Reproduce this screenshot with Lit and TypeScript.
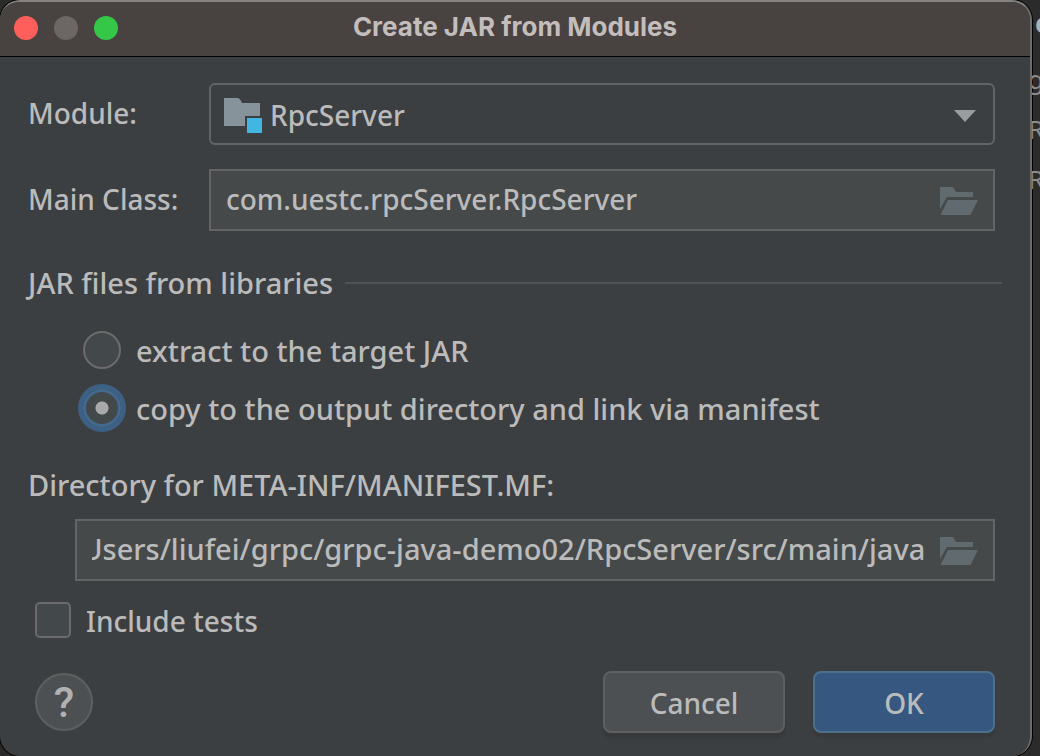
import { LitElement, html, css, svg } from "lit";
import { customElement, query, state } from "lit/decorators.js";

const folderIcon = svg`
  <path fill="#616a6e" d="M0 0h13l3 5h17v5H7L0 22z" />
  <path fill="#616a6e" d="M8 13h30l-7.500 15H0.500z" />
`;

@customElement("path-field")
class PathField extends LitElement {
  static properties = {
    value: { type: String },
    label: { type: String },
  };
  declare value: string;
  declare label: string;

  static styles = css`
    :host {
      display: flex;
      align-items: center;
      box-sizing: border-box;
      height: 62px;
      min-width: 0;
      border: 2px solid #646464;
      background: #45494a;
      padding: 0 15px;
      gap: 15px;
    }
    .text {
      flex: 1;
      min-width: 0;
      padding: 0;
      border: 0;
      outline: 0;
      background: none;
      color: inherit;
      font: inherit;
      margin-bottom: 2px;
    }
    .browse {
      display: flex;
      margin-top: 2px;
      padding: 0;
      border: 0;
      background: none;
    }
  `;

  @query(".text") input!: HTMLInputElement;

  firstUpdated() {
    requestAnimationFrame(() => {
      this.input.scrollLeft = this.input.scrollWidth;
    });
  }

  render() {
    return html`
      <input class="text" type="text" aria-label=${this.label} .value=${this.value} />
      <button class="browse" type="button" aria-label="Browse">
        <svg width="38" height="28" viewBox="0 0 38 28">${folderIcon}</svg>
      </button>
    `;
  }
}

@customElement("app-root")
class AppRoot extends LitElement {
  @state() private mode = "copy";

  static styles = css`
    :host {
      display: grid;
      grid-template-columns: minmax(0, 1fr) 8px;
      min-height: 100vh;
      overflow: hidden;
      background: #2b2b2b;
      color: #bbbbbb;
      font: 500 28px/38px "Noto Sans", "Open Sans", sans-serif;
    }
    * {
      box-sizing: border-box;
    }
    .dialog {
      display: flex;
      flex-direction: column;
      overflow: hidden;
      border-top: 2px solid #868282;
      border-right: 2px solid #6c6c6c;
      border-radius: 20px;
      background: #3c3f41;
      box-shadow: 0 0 0 1px #000;
    }
    .titlebar {
      display: grid;
      grid-template-columns: 1fr auto 1fr;
      align-items: center;
      height: 55px;
      padding: 0 14px 2px;
      border-bottom: 1px solid #000;
      background: #484241;
    }
    .lights {
      display: flex;
      gap: 16px;
    }
    .light {
      width: 24px;
      height: 24px;
      padding: 0;
      border: 0;
      border-radius: 50%;
    }
    .close {
      background: #ff5f5a;
    }
    .minimize {
      background: #6c6665;
    }
    .zoom {
      background: #34c748;
    }
    .title {
      margin: 0;
      padding-bottom: 2px;
      color: #c3bdbc;
      font: 700 26px/30px Inter, "Liberation Sans", sans-serif;
    }
    .content {
      display: flex;
      flex-direction: column;
      padding: 26px 35px 0 28px;
    }
    .fields {
      display: grid;
      grid-template-columns: 157px minmax(0, 1fr);
      column-gap: 24px;
      row-gap: 24px;
      align-items: center;
    }
    .name {
      padding-bottom: 2px;
      white-space: nowrap;
    }
    .combo {
      display: grid;
      align-items: center;
      height: 62px;
      border: 2px solid #646464;
      border-radius: 6px;
    }
    .combo > * {
      grid-area: 1 / 1;
    }
    .combo svg {
      margin-top: 4px;
      pointer-events: none;
    }
    .module {
      margin-left: 13px;
    }
    .arrow {
      justify-self: end;
      margin-right: 17px;
    }
    .select {
      width: 100%;
      height: 100%;
      padding: 2px 52px 0 59px;
      appearance: none;
      border: 0;
      outline: 0;
      background: none;
      color: inherit;
      font: inherit;
    }
    .section,
    .choices,
    .directory,
    .path {
      font-size: 29px;
      font-weight: 500;
    }
    .section {
      display: flex;
      align-items: center;
      gap: 12px;
      margin: 33px -7px 0 0;
    }
    .section::after {
      content: "";
      flex: 1;
      height: 2px;
      background: #505355;
    }
    .choices {
      display: flex;
      flex-direction: column;
      gap: 10px;
      margin: 24px 0 0;
      padding: 0 0 0 55px;
      border: 0;
    }
    .choice {
      display: flex;
      align-items: center;
      gap: 15px;
      height: 48px;
    }
    .caption {
      padding-top: 2px;
    }
    .radio {
      flex: none;
      width: 38px;
      height: 38px;
      margin: 0;
      appearance: none;
      outline: 0;
      border: 2px solid #6b6b6b;
      border-radius: 50%;
      background: #43494a;
    }
    .radio:checked {
      border-color: #43698e;
      border-width: 3px;
      background: radial-gradient(circle, #a9a9a9 6px, #43494a 7px);
      box-shadow: 0 0 0 5px #3d6185;
    }
    .directory {
      margin-top: 34px;
    }
    .path {
      margin: 15px 0 0 47px;
    }
    .include {
      display: flex;
      align-items: center;
      gap: 15px;
      margin: 19px 0 0 7px;
    }
    .check {
      flex: none;
      width: 36px;
      height: 36px;
      margin: 0;
      appearance: none;
      border: 2px solid #6b6b6b;
      border-radius: 5px;
      background: #43494a;
    }
    .footer {
      display: flex;
      align-items: center;
      gap: 28px;
      margin: 31px 0 23px 7px;
    }
    .help {
      width: 58px;
      height: 58px;
      margin-right: auto;
      padding: 2px 0 0;
      border: 2px solid #5e6060;
      border-radius: 50%;
      background: #4c5052;
      color: #afb1b3;
      font: 500 42px/50px Roboto, sans-serif;
    }
    .button {
      width: 182px;
      height: 62px;
      padding: 2px 0 0;
      border: 2px solid #5e6060;
      border-radius: 8px;
      background: #4c5052;
      box-shadow: 0 5px 2px #37393a;
      color: inherit;
      font: inherit;
    }
    .primary {
      border-color: #4c708c;
      background: #365880;
    }
    .behind {
      display: flex;
      flex-direction: column;
      gap: 16px;
      padding: 6px 0 0 1px;
      overflow: hidden;
      color: #8c8c8c;
      font: 26px/34px "Noto Sans", sans-serif;
    }
    .behind-title {
      height: 40px;
      padding-left: 2px;
      color: #b0b0b0;
      font-weight: 700;
    }
    .clipped {
      margin-left: -5px;
    }
  `;

  private choice(id: string, text: string) {
    return html`
      <label class="choice">
        <input
          class="radio"
          type="radio"
          name="libraries"
          .checked=${this.mode === id}
          @change=${() => (this.mode = id)}
        />
        <span class="caption">${text}</span>
      </label>
    `;
  }

  render() {
    return html`
      <main class="dialog">
        <header class="titlebar">
          <div class="lights">
            <button class="light close" aria-label="Close"></button>
            <button class="light minimize" aria-label="Minimize" disabled></button>
            <button class="light zoom" aria-label="Zoom"></button>
          </div>
          <h1 class="title">Create JAR from Modules</h1>
        </header>
        <form class="content" @submit=${(e: Event) => e.preventDefault()}>
          <div class="fields">
            <label class="name" for="module">Module:</label>
            <div class="combo">
              <select class="select" id="module">
                <option>RpcServer</option>
              </select>
              <svg class="module" width="38" height="36" viewBox="0 0 38 36">
                <path fill="#87939a" d="M0 0h13q3 0 5 5h18v13H21v10H0z" />
                <path fill="#40b6e0" d="M23 20h15v15H23z" />
              </svg>
              <svg class="arrow" width="22" height="12" viewBox="0 0 22 12">
                <path fill="#9a9da0" d="M0 0h22L11 12z" />
              </svg>
            </div>
            <label class="name" for="main-class">Main Class:</label>
            <path-field
              id="main-class"
              label="Main Class"
              value="com.uestc.rpcServer.RpcServer"
            ></path-field>
          </div>
          <h2 class="section">JAR files from libraries</h2>
          <fieldset class="choices" aria-label="JAR files from libraries">
            ${this.choice("extract", "extract to the target JAR")}
            ${this.choice("copy", "copy to the output directory and link via manifest")}
          </fieldset>
          <label class="directory" for="directory">Directory for META-INF/MANIFEST.MF:</label>
          <path-field
            class="path"
            id="directory"
            label="Directory for META-INF/MANIFEST.MF"
            value="/Users/liufei/grpc/grpc-java-demo02/RpcServer/src/main/java"
          ></path-field>
          <label class="include">
            <input class="check" type="checkbox" />
            <span class="caption">Include tests</span>
          </label>
          <footer class="footer">
            <button class="help" type="button" aria-label="Help">?</button>
            <button class="button" type="button">Cancel</button>
            <button class="button primary" type="submit">OK</button>
          </footer>
        </form>
      </main>
      <div class="behind" aria-hidden="true">
        <span class="behind-title">e</span>
        <span class="clipped">g</span>
        <span class="clipped">R</span>
        <span class="clipped">R</span>
      </div>
    `;
  }
}
